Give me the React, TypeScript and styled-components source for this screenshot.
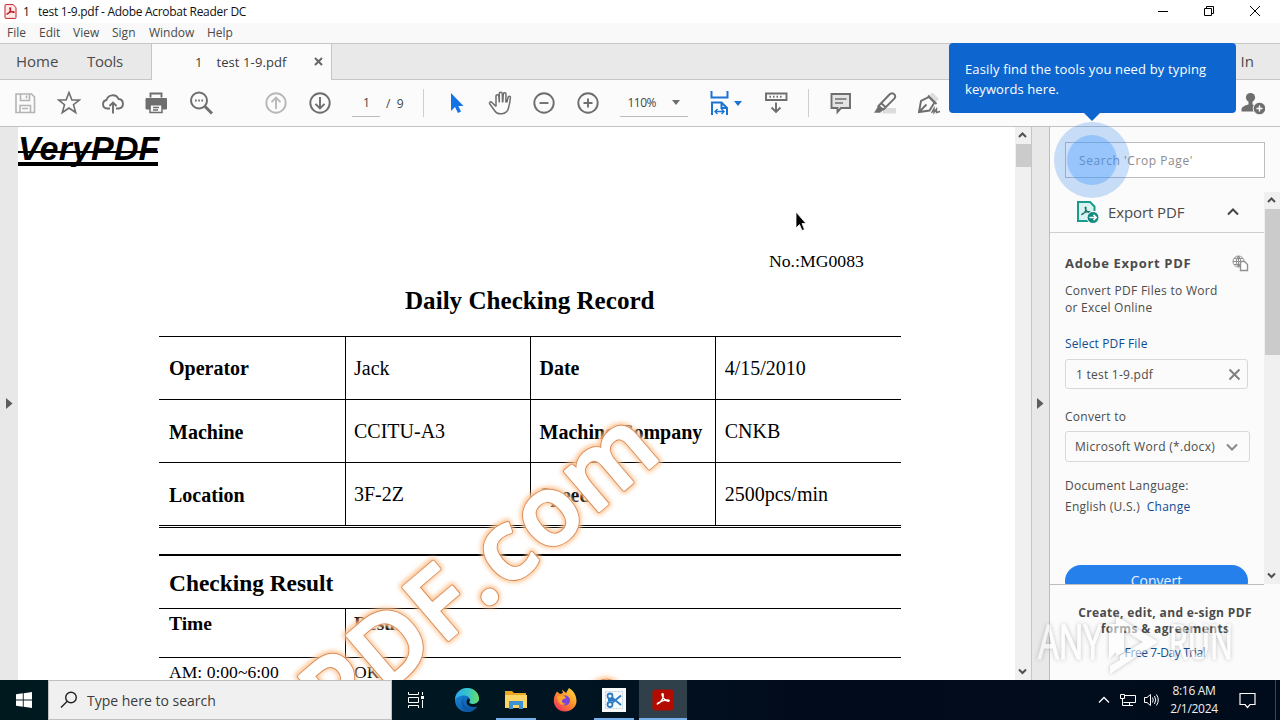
import React from 'react';
import styled, { createGlobalStyle } from 'styled-components';

const Global = createGlobalStyle`
  * { box-sizing: border-box; }
  body { margin: 0; background: #fff; font-family: "Open Sans", "Noto Sans", sans-serif; overflow: hidden; }
  svg { display: block; flex: none; }
`;

const Screen = styled.div`
  position: relative; width: 1280px; height: 720px; overflow: hidden;
  display: flex; flex-direction: column;
`;

const Label = styled.span<{ $ls?: number; $ml?: number }>`
  white-space: pre;
  letter-spacing: ${p => p.$ls ?? 0}px;
  margin-left: ${p => p.$ml ?? 0}px;
`;

/* ---- window chrome ---- */
const TitleBar = styled.header`
  height: 23px; flex: none; display: flex; align-items: center; padding: 0 19px 1px 4px;
  background: #fff; font-size: 12px; color: #111;
`;
const WindowButtons = styled.div`
  margin-left: auto; display: flex; gap: 34px; align-items: center; padding-bottom: 1px;
`;
const MenuBar = styled.nav`
  height: 20px; flex: none; display: flex; align-items: center; padding: 0 0 0 7px;
  background: #f9f9f9; font-size: 12px; color: #4a4a4a;
`;
const TabStrip = styled.div`
  height: 37px; flex: none; display: flex; background: #e9e9e9; color: #4b4b4b; font-size: 15px;
  border-top: 1px solid #c6c6c6; border-bottom: 1px solid #c6c6c6; align-items: center;
`;
const NavTab = styled.div<{ $w: number }>`
  width: ${p => p.$w}px; white-space: nowrap; padding-bottom: 1px;
`;
const FileTab = styled.div`
  width: 181px; height: 36px; margin-bottom: -1px; background: #fbfbfb; font-size: 13px;
  border-left: 1px solid #c6c6c6; border-right: 1px solid #c6c6c6; color: #3a3a3a;
  display: flex; align-items: center; padding: 0 8px 1px 43px; justify-content: space-between;
`;
const SignIn = styled.div`
  margin-left: auto; padding: 0 26px 1px 0; font-size: 15px;
`;
const Toolbar = styled.div`
  height: 47px; flex: none; display: flex; align-items: center; background: #fbfbfb;
  border-bottom: 1px solid #c2c2c2; padding-left: 13px; font-size: 12px; color: #444;
`;
const Group = styled.div<{ $ml?: number }>`
  display: flex; gap: 20px; margin-left: ${p => p.$ml ?? 0}px;
`;
const Field = styled.div<{ $w: number; $ml: number; $pl: number }>`
  width: ${p => p.$w}px; height: 27px; margin-left: ${p => p.$ml}px; padding-left: ${p => p.$pl}px;
  border-bottom: 1px solid #bdbdbd; display: flex; align-items: center; white-space: pre;
`;
const Divider = styled.div<{ $ml: number }>`
  width: 1px; height: 28px; background: #cfcfcf; margin-left: ${p => p.$ml}px;
`;
const Caret = styled.i<{ $c: string; $ml: number }>`
  margin-left: ${p => p.$ml}px; border: 4px solid transparent; border-top: 5px solid ${p => p.$c}; border-bottom: 0;
`;

/* ---- document ---- */
const Main = styled.main`
  height: 553px; flex: none; display: flex;
`;
const Gutter = styled.div<{ $w: number; $edge?: boolean; $left?: boolean }>`
  width: ${p => p.$w}px; flex: none; background: #e8e8e8; display: flex; align-items: center;
  padding-left: ${p => (p.$left ? 6 : 5)}px;
  border-left: ${p => (p.$edge ? '1px solid #c6c6c6' : '0')};
  border-right: ${p => (p.$edge ? '1px solid #bcbcbc' : '0')};
`;
const Page = styled.article`
  position: relative; width: 997px; flex: none; background: #fff; overflow: hidden; color: #000;
  font-family: "Liberation Serif", serif; display: flex; flex-direction: column;
`;
const Brand = styled.div`
  position: relative; width: 140px; height: 40px; flex: none; white-space: nowrap;
  font: italic bold 34px/40px "Liberation Sans", sans-serif; letter-spacing: 0.15px; padding-top: 1px;
  &::before { content: ''; position: absolute; left: 0; right: 0; top: 24px; height: 2px; background: #000; }
  &::after { content: ''; position: absolute; left: 0; right: 0; top: 35px; height: 4px; background: #000; }
`;
const DocNumber = styled.div`
  margin: 84px 0 0 751px; height: 20px; font-size: 17.7px; line-height: 20px;
`;
const DocTitle = styled.h1`
  margin: 15px 0 0 387px; height: 30px; font-size: 25.1px; line-height: 30px; white-space: nowrap;
`;
const Rows = styled.section`
  margin: 20px 0 0 141px; width: 742px; flex: none;
`;
const Row = styled.div`
  display: grid; grid-template-columns: 186px 185px 185px 186px; height: 63px; border-top: 1px solid #000;
`;
const Cell = styled.div<{ $bold?: boolean; $first?: boolean; $drop?: number; $pl: number }>`
  font-size: 20px; line-height: 24px; padding: ${p => 19 + (p.$drop ?? 0)}px 0 0 ${p => p.$pl}px;
  font-weight: ${p => (p.$bold ? 700 : 400)}; white-space: nowrap;
  border-left: ${p => (p.$first ? '0' : '1px solid #000')};
`;
const DoubleRule = styled.div`
  height: 3px; border-top: 1px solid #000; border-bottom: 1px solid #000;
`;
const Results = styled.section`
  margin: 26px 0 0 141px; width: 742px; flex: none; border-top: 2px solid #000;
`;
const ResultsTitle = styled.h2`
  margin: 0; height: 52px; padding: 13px 0 0 10px; font-size: 23.4px; line-height: 28px;
`;
const ResultRow = styled.div<{ $h: number; $size: number; $bold?: boolean }>`
  display: grid; grid-template-columns: 186px 556px; height: ${p => p.$h}px; border-top: 1px solid #000;
  font-size: ${p => p.$size}px; font-weight: ${p => (p.$bold ? 700 : 400)}; line-height: ${p => (p.$bold ? 30 : 28)}px;
  > div { padding-left: 10px; }
  > div + div { padding-left: 8px; border-left: ${p => (p.$bold ? '1px solid #000' : '1px solid transparent')}; }
`;
const Overlay = styled.svg`
  position: absolute; left: 0; top: 0;
`;
const Stamp = styled.text`
  font: 600 97px "Open Sans", sans-serif; letter-spacing: 3.4px; stroke-linejoin: round;
`;

/* ---- scrollbars ---- */
const ScrollBar = styled.div<{ $w: number }>`
  width: ${p => p.$w}px; flex: none; background: #f0f0f0; display: flex; flex-direction: column; align-items: center;
`;
const ScrollThumb = styled.div<{ $h: number }>`
  width: 15px; height: ${p => p.$h}px; background: #cbcbcb; margin-bottom: auto;
`;
const ScrollArrow = styled.div`
  height: 17px; width: 100%; display: flex; align-items: center; justify-content: center; padding-right: 1px;
`;

/* ---- tools panel ---- */
const Panel = styled.aside`
  width: 230px; background: #fbfbfb; display: flex; flex-direction: column; color: #4b4b4b; font-size: 12px;
`;
const SearchBox = styled.div`
  width: 200px; height: 36px; margin: 15px 0 14px 15px; flex: none; background: #fff;
  border: 1px solid #bdbdbd; padding-left: 13px; display: flex; align-items: center; color: #8c8c8c;
`;
const PanelBody = styled.div`
  height: 392px; flex: none; display: flex;
`;
const PanelScroll = styled.div`
  width: 214px; height: 393px; overflow: hidden; display: flex; flex-direction: column; border-bottom: 1px solid #bdbdbd;
`;
const ExportHeader = styled.div`
  height: 41px; flex: none; border-bottom: 1px solid #cfcfcf; display: flex; align-items: center;
  padding: 0 25px 0 26px; font-size: 15px;
`;
const HeaderChevron = styled.span`
  margin-left: auto;
`;
const ExportForm = styled.div`
  padding: 0 16px 0 15px; display: flex; flex-direction: column; align-items: flex-start;
`;
const Line = styled.div<{ $mt: number; $c?: string; $bold?: boolean; $size?: number; $ls?: number }>`
  margin-top: ${p => p.$mt}px; height: 18px; line-height: 18px; white-space: pre; width: 184px; flex: none;
  display: flex; align-items: center; justify-content: ${p => (p.$bold ? 'space-between' : 'flex-start')};
  color: ${p => p.$c ?? '#4b4b4b'}; letter-spacing: ${p => p.$ls ?? 0.25}px;
  font-weight: ${p => (p.$bold ? 700 : 400)}; font-size: ${p => p.$size ?? 12}px;
`;
const Box = styled.div<{ $w: number; $h: number; $mt: number; $pl: number; $pr: number }>`
  width: ${p => p.$w}px; height: ${p => p.$h}px; margin-top: ${p => p.$mt}px; flex: none;
  border: 1px solid #d8d8d8; border-radius: 3px; display: flex; align-items: center; justify-content: space-between;
  padding: 0 ${p => p.$pr}px 0 ${p => p.$pl}px;
`;
const ConvertButton = styled.div`
  width: 183px; height: 32px; margin-top: 49px; flex: none; border-radius: 16px; background: #2680eb; color: #e8f2ff;
  font-size: 14px; line-height: 31px; text-align: center;
`;
const Link = styled.span`
  color: #0f4c94;
`;
const Promo = styled.div`
  flex: 1; text-align: center; padding-top: 21px; font-weight: 700; font-size: 12px; line-height: 15.5px; white-space: pre;
  letter-spacing: 0.36px;
`;
const PromoLink = styled.div`
  margin-top: 9px; font-weight: 400; color: #0f4c94; letter-spacing: -0.4px;
`;

/* ---- floating parts ---- */
const Callout = styled.div`
  position: absolute; left: 949px; top: 43px; width: 287px; height: 70px; border-radius: 4px; background: #0d66d0;
  color: #fff; font-size: 13px; line-height: 20px; padding: 16px 0 0 16px; white-space: nowrap;
  &::after {
    content: ''; position: absolute; left: 134px; top: 69px;
    border: 9px solid transparent; border-top-color: #0d66d0; border-bottom: 0;
  }
`;
const Pulse = styled.div`
  position: absolute; left: 1054px; top: 122px; width: 76px; height: 76px; border-radius: 50%;
  background: rgba(38, 128, 235, 0.25); display: flex; align-items: center; justify-content: center;
  &::after { content: ''; width: 50px; height: 50px; border-radius: 50%; background: rgba(70, 155, 255, 0.38); }
`;
const Recorder = styled.svg`
  position: absolute; left: 1030px; top: 606px;
`;
const Pointer = styled.svg`
  position: absolute; left: 795px; top: 211px;
`;

/* ---- taskbar ---- */
const Taskbar = styled.footer`
  height: 40px; flex: none; display: flex; align-items: stretch;
  background: linear-gradient(90deg, #00191f, #001521 45%, #020b1c 62%, #000c1b);
`;
const StartButton = styled.div`
  width: 48px; display: flex; align-items: center; justify-content: center;
`;
const TaskSearch = styled.div`
  width: 344px; background: #f0f0f0; border: 1px solid #bfbfbf; display: flex; align-items: center;
  padding-left: 11px; font-size: 14px; color: #3c3c3c;
`;
const TaskButton = styled.div<{ $w?: number; $open?: boolean; $active?: boolean; $ml?: number }>`
  width: ${p => p.$w ?? 40}px; margin-left: ${p => p.$ml ?? 0}px; display: flex; align-items: center; justify-content: center;
  background: ${p => (p.$active ? '#2f404b' : 'transparent')}; padding-top: 2px;
  border-bottom: 2px solid ${p => (p.$open ? '#76b0ec' : 'transparent')};
`;
const Tray = styled.div`
  margin-left: auto; display: flex; align-items: center; color: #f0f0f0; font-size: 12px;
`;
const TrayIcons = styled.div`
  display: flex; align-items: center; gap: 6px; padding-left: 9px;
`;
const Clock = styled.div`
  width: 52px; margin: 0 19px 0 7px; text-align: center; line-height: 18px; white-space: nowrap;
`;
const TrayEdge = styled.div`
  width: 1px; height: 40px; background: #3b4650; margin: 0 4px 0 19px;
`;

const Icon = ({ children, c = '#6e6e6e', w = 1.9 }: { children: React.ReactNode; c?: string; w?: number }) => (
  <svg width="24" height="24" viewBox="0 0 24 24" fill="none" stroke={c} strokeWidth={w}>{children}</svg>
);
const Chevron = ({ up, w = 8, c = '#505050', s = 2 }: { up?: boolean; w?: number; c?: string; s?: number }) => (
  <svg width={w + 2} height={w / 2 + 3} fill="none" stroke={c} strokeWidth={s}>
    <path d={up ? `M1 ${w / 2 + 1.5} L${w / 2 + 1} 1.5 L${w + 1} ${w / 2 + 1.5}` : `M1 1.5 L${w / 2 + 1} ${w / 2 + 1.5} L${w + 1} 1.5`} />
  </svg>
);
const SideArrow = () => <svg width="7" height="11"><path d="M0 0 L6.5 5.5 L0 11Z" fill="#5c5c5c" /></svg>;

const AcrobatMark = ({ c, w = 1.6 }: { c: string; w?: number }) => (
  <path d="M3 17 C8 15.5 12 8 11 3.2 C10.600 1.800 9 2.200 9.300 4 C10 8 14 13 18.500 13.200 C20.500 13 19.500 11 17 11.200 C12 11.500 7.500 13 4 15.500 C2.500 16.700 2 17.500 3 17" fill="none" stroke={c} strokeWidth={w} />
);

const stamps = [{ x: 319, y: 608 }, { x: 304, y: 862 }];

const details = [
  ['Operator', 'Jack', 'Date', '4/15/2010'],
  ['Machine', 'CCITU-A3', 'Machine Company', 'CNKB'],
  ['Location', '3F-2Z', 'Speed', '2500pcs/min'],
];
const cellInsets = [10, 8, 8.5, 8.7];

export default function App() {
  return (
    <Screen>
      <Global />
      <TitleBar>
        <svg width="13" height="15" viewBox="0 0 13 15">
          <path d="M1 1.500 Q1 .6 2 .6 H9 L12 3.500 V13.500 Q12 14.400 11 14.400 H2 Q1 14.400 1 13.500Z" fill="#ffe9e9" stroke="#c4202b" />
          <g transform="translate(1.800 2.800) scale(.43)"><AcrobatMark c="#c4202b" w={3} /></g>
        </svg>
        <Label $ml={6} $ls={-0.29}>{'1   test 1-9.pdf - Adobe Acrobat Reader DC'}</Label>
        <WindowButtons>
          <svg width="12" height="12"><path d="M1 6.500H11" stroke="#000" /></svg>
          <svg width="12" height="12" fill="none" stroke="#000"><path d="M1.500 3.500h7v7h-7z M3.500 3V1.500h7v7H9" /></svg>
          <svg width="12" height="12" fill="none" stroke="#000"><path d="M1 1L11 11M11 1L1 11" /></svg>
        </WindowButtons>
      </TitleBar>
      <MenuBar>
        <NavTab $w={32}>File</NavTab><NavTab $w={34}>Edit</NavTab><NavTab $w={39}>View</NavTab>
        <NavTab $w={37}>Sign</NavTab><NavTab $w={58}>Window</NavTab><NavTab $w={40}>Help</NavTab>
      </MenuBar>
      <TabStrip>
        <NavTab $w={71}><Label $ml={16}>Home</Label></NavTab>
        <NavTab $w={80}><Label $ml={16} $ls={-0.3}>Tools</Label></NavTab>
        <FileTab>
          <Label $ls={0.1}>{'1    test 1-9.pdf'}</Label>
          <svg width="9" height="9" stroke="#666" strokeWidth="2"><path d="M1 1L8 8M8 1L1 8" /></svg>
        </FileTab>
        <SignIn>Sign In</SignIn>
      </TabStrip>
      <Toolbar>
        <Group>
          <Icon c="#b4b4b4" w={1.6}><path d="M3 3H18.500L21.500 6V21.500H3Z M7.500 3V9.500H16.500V3 M7 21V14.500H17.500V21 M13.500 4.500V7.500 M9 17.500H15" /></Icon>
          <Icon w={1.6}><path d="M12 1.500L14.900 9H22.500L16.500 13.700L18.700 21.500L12 17L5.300 21.500L7.500 13.700L1.500 9H9.100Z" /></Icon>
          <Icon><path d="M9 17.500H6A4.300 4.300 0 0 1 5.500 9A6.500 6.500 0 0 1 17.600 8A4.800 4.800 0 0 1 18 17.500H15 M12 22.500V11.500 M8.500 15L12 11.500L15.500 15" /></Icon>
          <Icon><path d="M5.500 6.500V2.500H16.500V6.500" /><path d="M1 7.500H21.500V18H17.500V14H5V18H1Z" fill="#6e6e6e" strokeWidth="1" /><path d="M5 14V21.500H17V14 M8 16.500H14 M8 19H13" strokeWidth="1.500" /></Icon>
          <Icon w={2}><circle cx="10" cy="9.500" r="8" /><path d="M16 15.500L23 22.500" strokeWidth="3" /><path d="M6 9.500H7.700M9.200 9.500H10.900M12.400 9.500H14.100" /></Icon>
        </Group>
        <Group $ml={51}>
          <Icon c="#b8b8b8"><circle cx="12" cy="12" r="9.700" /><path d="M12 18V7M7.500 11.200L12 6.700L16.500 11.200" /></Icon>
          <Icon><circle cx="12" cy="12" r="9.700" /><path d="M12 6V17M7.500 12.800L12 17.300L16.500 12.800" /></Icon>
        </Group>
        <Field $w={28} $ml={20} $pl={11}>1</Field>
        <Label $ml={6}>{'/  9'}</Label>
        <Divider $ml={19} />
        <Group $ml={20}>
          <Icon c="none"><path d="M7 2V20L11 16L14 22L17 20.500L14.300 15H19.500Z" fill="#1473e6" /></Icon>
          <Icon w={1.500}><path d="M8 15.500L4 11.500C2.500 10 .8 11.500 2 13.200L6.500 19.500C9.500 24.500 18.500 23.500 20.200 18C21.300 14.500 22.200 9 22.400 6.500C22.500 4.700 20.400 4.700 20 6.500L18.800 11.500M8 15.500V5C8 3.200 10.500 3.200 10.800 5L11.300 11.500M11.300 11V2.500C11.300 .8 14.200 .8 14.300 2.500L14.500 11.500M14.800 11L15.300 3C15.500 1.200 18 1.300 18 3.200L17.800 11.500" /></Icon>
          <Icon><circle cx="12" cy="12" r="9.700" /><path d="M7.500 12H16.500" /></Icon>
          <Icon><circle cx="12" cy="12" r="9.700" /><path d="M7.500 12H16.500M12 7.500V16.500" /></Icon>
        </Group>
        <Field $w={68} $ml={20} $pl={8}><Label $ls={-0.5}>110%</Label><Caret $c="#6e6e6e" $ml={16} /></Field>
        <Group $ml={19}>
          <Icon c="#1b74d4" w={2}><path d="M4.500 0V6.500H20.500V0 M5 24V11.500H14.500L20 17V24 M14.500 11.500V17H20" /><path d="M8 20.500H17 M10.500 18L8 20.500L10.500 23 M14.500 18L17 20.500L14.500 23" strokeWidth="1.400" /></Icon>
        </Group>
        <Caret $c="#1b74d4" $ml={3} />
        <Group $ml={22}>
          <Icon><path d="M2 2.500H22.500V9H2Z M5.500 5.800H7M9 5.800H10.500M12.500 5.800H14M16 5.800H17.500 M12 11.500V20.500 M7.500 16.500L12 21L16.500 16.500" /></Icon>
        </Group>
        <Divider $ml={20} />
        <Group $ml={20}>
          <Icon><path d="M2.500 3H21V17H12L8.500 21V17H2.500Z" fill="#e4e4e4" /><path d="M6 8H17.500M6 12H14" strokeWidth="1.300" /></Icon>
          <Icon><path d="M12 17H23V22.500H9Z" fill="#dcdcdc" stroke="none" /><path d="M5.500 15L16.500 3.500Q19 1 21.500 3.500Q23 5.500 21.500 7.500L10.500 18.500ZM8 12L13 16.500" /><path d="M5.500 15L10.500 18.500L7 21.500H1.500Z" fill="#6e6e6e" strokeWidth=".5" /></Icon>
          <Icon><path d="M12.500 4L15.500 1.500L22 8L18.500 11Z" fill="#dcdcdc" stroke="none" /><path d="M2 21L4 10L12 6L17.500 11.500L12.500 19.500ZM2 21L9.500 13.500M11 4.500L19.500 13" /><path d="M14.500 22L17 17.500V21.500L19.500 18V21.500L23 20.500" strokeWidth="1.400" /></Icon>
        </Group>
        <Group $ml={300}>
          <Icon c="none"><circle cx="9.500" cy="6.500" r="4.600" fill="#6e6e6e" /><path d="M.5 20.500V18Q1 15 7.500 13.500V9H11.500V13.500Q16 14.500 16 20.500Z" fill="#6e6e6e" /><circle cx="18.500" cy="17.500" r="6.300" fill="#6e6e6e" stroke="#fbfbfb" strokeWidth="1" /><path d="M15.500 17.500H21.500M18.500 14.500V20.500" stroke="#fff" strokeWidth="1.500" /></Icon>
        </Group>
      </Toolbar>

      <Main>
        <Gutter $w={18} $left><SideArrow /></Gutter>
        <Page>
          <Brand>VeryPDF</Brand>
          <DocNumber>No.:MG0083</DocNumber>
          <DocTitle>Daily Checking Record</DocTitle>
          <Rows>
            {details.map((r, i) => (
              <Row key={r[0]}>
                {r.map((t, j) => (
                  <Cell key={t} $first={j === 0} $bold={j % 2 === 0} $drop={i > 0 && j % 2 === 0 ? 1 : 0} $pl={cellInsets[j]}>{t}</Cell>
                ))}
              </Row>
            ))}
            <DoubleRule />
          </Rows>
          <Results>
            <ResultsTitle>Checking Result</ResultsTitle>
            <ResultRow $h={49} $size={19.5} $bold><div>Time</div><div>Result</div></ResultRow>
            <ResultRow $h={49} $size={17.6}><div>AM: 0:00~6:00</div><div>OK</div></ResultRow>
          </Results>
          <Overlay width="997" height="553">
            <defs><filter id="glow" x="-20%" y="-40%" width="140%" height="180%"><feGaussianBlur stdDeviation="2" /></filter></defs>
            {stamps.map(s => (
              <g key={s.y} transform={`translate(${s.x} ${s.y}) rotate(-40.5)`}>
                <Stamp fill="#fdc594" stroke="#fdc594" strokeWidth="7.500" filter="url(#glow)">PDF.com</Stamp>
                <Stamp fill="#fff" stroke="#d98a55" strokeWidth="4">PDF.com</Stamp>
                <Stamp fill="#fff" stroke="#fff" strokeWidth="2.200">PDF.com</Stamp>
              </g>
            ))}
          </Overlay>
        </Page>
        <ScrollBar $w={16}>
          <ScrollArrow><Chevron up w={7} /></ScrollArrow>
          <ScrollThumb $h={23} />
          <ScrollArrow><Chevron w={7} /></ScrollArrow>
        </ScrollBar>
        <Gutter $w={19} $edge><SideArrow /></Gutter>
        <Panel>
          <SearchBox><Label $ls={0.57}>Search 'Crop Page'</Label></SearchBox>
          <PanelBody>
            <PanelScroll>
              <ExportHeader>
                <svg width="24" height="24" fill="none" stroke="#1b9a8e" strokeWidth="2">
                  <path d="M12 21H2V2H14L18.500 6.500V11" fill="#d7f2ef" />
                  <g transform="translate(4.500 6) scale(.5)"><AcrobatMark c="#1b6f69" w={2.400} /></g>
                  <circle cx="17" cy="17.500" r="6" fill="#12887e" stroke="#fbfbfb" strokeWidth="1" />
                  <path d="M13.500 17.500H20M17.500 14.800L20.200 17.500L17.500 20.200" stroke="#fff" strokeWidth="1.600" />
                </svg>
                <Label $ml={8} $ls={-0.1}>Export PDF</Label>
                <HeaderChevron><Chevron up w={10} c="#444" /></HeaderChevron>
              </ExportHeader>
              <ExportForm>
                <Line $mt={21} $bold $size={13}>
                  <Label $ls={0.68}>Adobe Export PDF</Label>
                  <svg width="17" height="17" viewBox="0 0 17 17" fill="none" stroke="#909090">
                    <circle cx="6.500" cy="6.500" r="5.500" /><path d="M1 6.500H12M6.500 1V12M6.500 1Q2 6.500 6.500 12M6.500 1Q11 6.500 6.500 12M2 3.500H11M2 9.500H8" />
                    <path d="M8.500 6.500H12.500L15.500 9.500V15.500H8.500Z" fill="#fff" strokeWidth="1.400" />
                  </svg>
                </Line>
                <Line $mt={10} $ls={0.29}>Convert PDF Files to Word</Line>
                <Line $mt={-1}>or Excel Online</Line>
                <Line $mt={18} $c="#0f4c94" $ls={0.14}>Select PDF File</Line>
                <Box $w={183} $h={30} $mt={6} $pl={10} $pr={6}>
                  <Label $ls={0.25}>1 test 1-9.pdf</Label>
                  <svg width="13" height="13" stroke="#808080" strokeWidth="2"><path d="M1.500 1.500L11.500 11.500M11.500 1.500L1.500 11.500" /></svg>
                </Box>
                <Line $mt={19}>Convert to</Line>
                <Box $w={185} $h={31} $mt={5} $pl={9} $pr={11}>
                  <Label $ls={0.3}>Microsoft Word (*.docx)</Label><Chevron w={10} c="#888" />
                </Box>
                <Line $mt={15} $ls={0.27}>Document Language:</Line>
                <Line $mt={3}>English (U.S.)  <Link>Change</Link></Line>
                <ConvertButton>Convert</ConvertButton>
              </ExportForm>
            </PanelScroll>
            <ScrollBar $w={16}>
              <ScrollArrow><Chevron up w={7} /></ScrollArrow>
              <ScrollThumb $h={146} />
              <ScrollArrow><Chevron w={7} /></ScrollArrow>
            </ScrollBar>
          </PanelBody>
          <Promo>
            {'Create, edit, and e-sign PDF\nforms & agreements'}
            <PromoLink>Free 7-Day Trial</PromoLink>
          </Promo>
        </Panel>
      </Main>

      <Taskbar>
        <StartButton>
          <svg width="16" height="16" fill="#fff"><path d="M0 2.300L6.800 1.300V7.500H0ZM7.700 1.200L16 0V7.500H7.700ZM0 8.400H6.800V14.700L0 13.700ZM7.700 8.400H16V16L7.700 14.800Z" /></svg>
        </StartButton>
        <TaskSearch>
          <svg width="18" height="18" fill="none" stroke="#222" strokeWidth="1.400"><circle cx="11" cy="6.500" r="5.300" /><path d="M7.300 10.300L1 16.600" /></svg>
          <Label $ml={9}>Type here to search</Label>
        </TaskSearch>
        <TaskButton $w={48}>
          <svg width="18" height="18" fill="none" stroke="#fff"><path d="M1.500 1V3.500H11.500V1M1.500 6.500H11.500V11.500H1.500ZM1.500 17V14.500H11.500V17M15.500 1V4M15.500 9V17" /><path d="M14 5H17V8H14Z" fill="#fff" stroke="none" /></svg>
        </TaskButton>
        <TaskButton $ml={7}>
          <svg width="24" height="24" viewBox="0 0 24 24">
            <defs>
              <linearGradient id="edgeTop" x1="0" x2="1"><stop offset="0" stopColor="#2aa9e8" /><stop offset=".55" stopColor="#36c6c9" /><stop offset="1" stopColor="#6be05a" /></linearGradient>
              <linearGradient id="edgeLow" x1="0" y1="0" x2="1" y2="1"><stop offset="0" stopColor="#1a8fe0" /><stop offset="1" stopColor="#0a4a9c" /></linearGradient>
            </defs>
            <circle cx="12" cy="12" r="12" fill="url(#edgeLow)" />
            <path d="M0 11C1 4 6 0 12 0C19 0 24 5 24 10.500C24 14 21 16 18 16C15 16 13.500 15 14.500 13.500C16 11 13.500 7.500 9.500 7.500C5 7.500 1 9.500 0 12Z" fill="url(#edgeTop)" />
            <path d="M9 9C6 15 11 20.500 16 20.500C19 20.500 21 19.500 22.500 18C20 22 16.500 24 12.500 24C7 23 4.500 14 9 9Z" fill="#0c59a4" />
            <path d="M14.500 13.500C13.500 15 15 16 18 16C20.500 16 22.500 15 24 13V17.500C20 20 14 19.500 12 16C11 14 12 11 13.500 10.500C15 11 15 12.500 14.500 13.500Z" fill="#00151f" />
          </svg>
        </TaskButton>
        <TaskButton $ml={9} $open>
          <svg width="22" height="20" viewBox="0 0 22 20">
            <path d="M0 1H7L9 3H21V8H0Z" fill="#e8a820" /><path d="M0 5H22V18H0Z" fill="#fbd667" />
            <path d="M4 11H18V19H14V15H8V19H4Z" fill="#3d92d4" />
          </svg>
        </TaskButton>
        <TaskButton $ml={9}>
          <svg width="24" height="24" viewBox="0 0 24 24">
            <defs><linearGradient id="fox" x1="1" y1="0" x2=".2" y2="1"><stop offset="0" stopColor="#ffe94a" /><stop offset=".5" stopColor="#ff9428" /><stop offset="1" stopColor="#f0305c" /></linearGradient></defs>
            <path d="M4 3.500L7 6L10 5L9 1.500L13 5L16 0C21 3 23.500 8 23.500 13C23.500 19 18 23.500 12 23.500C5 23.500 .5 18 .8 12C1 8 2.500 6 4 3.500Z" fill="url(#fox)" />
            <circle cx="12" cy="12.500" r="5" fill="#7a45d8" /><path d="M4 9C7 7 11 7 13 10L9.500 11.500C8 14 10 16 13 15.500C9 19 4.500 15 4 9Z" fill="#ffa52b" />
          </svg>
        </TaskButton>
        <TaskButton $ml={9} $open>
          <svg width="24" height="24" viewBox="0 0 24 24" fill="none" stroke="#2b7cc4" strokeWidth="1.800">
            <path d="M0 0H24V24H0Z" fill="#f8fafc" stroke="none" /><path d="M3.500 3.500H20.500V20.500H3.500Z" stroke="#c3d2e0" strokeWidth="1" strokeDasharray="2 1" />
            <circle cx="8" cy="8" r="2.500" /><circle cx="8" cy="16.500" r="2.500" /><path d="M10 9.500L19 17M10 15L19 7.500M6 12H13" />
          </svg>
        </TaskButton>
        <TaskButton $ml={5} $w={48} $open $active>
          <svg width="22" height="22" viewBox="0 0 22 22"><rect x=".5" y=".5" width="21" height="21" rx="3" fill="#b30b00" /><g transform="translate(3.500 3) scale(.7)"><AcrobatMark c="#fff" w={2} /></g></svg>
        </TaskButton>
        <Tray>
          <Chevron up w={10} c="#fff" s={1.300} />
          <TrayIcons>
            <svg width="18" height="16" fill="none" stroke="#fff"><path d="M5.500 3.500H16.500V10.500H4.500M1.500 2.500H5.500V6.500H1.500ZM3.500 6.500V13.500H8M10.500 10.500V13.500M6 13.500H14" /></svg>
            <svg width="18" height="16" fill="none" stroke="#fff"><path d="M1.500 5.500H4L7.500 2.500V13.500L4 10.500H1.500ZM9.500 5.500Q11 8 9.500 10.500M11.500 4Q14 8 11.500 12M13.500 2.500Q17 8 13.500 13.500" /></svg>
          </TrayIcons>
          <Clock><Label $ls={-0.3}>8:16 AM</Label><br /><Label $ls={-0.3}>2/1/2024</Label></Clock>
          <svg width="17" height="17" fill="none" stroke="#fff" strokeWidth="1.200"><path d="M1 1.500H16V12.500H11L8.500 15.500L6 12.500H1Z" /></svg>
          <TrayEdge />
        </Tray>
      </Taskbar>

      <Callout><Label $ls={0.15}>Easily find the tools you need by typing</Label><br /><Label $ls={0.1}>keywords here.</Label></Callout>
      <Pulse />
      <Pointer width="12" height="21"><path d="M1 1V17L4.500 13.500L7 19.500L9.500 18.500L7 12.500H11Z" fill="#000" stroke="#fff" strokeWidth=".8" /></Pointer>
      <Recorder width="215" height="74">
        <defs><filter id="soft" x="-10%" y="-20%" width="120%" height="140%"><feDropShadow dx="0" dy="0" stdDeviation="2" floodColor="#666" floodOpacity=".75" /></filter></defs>
        <g filter="url(#soft)" fill="#fff" stroke="#fff" opacity=".55" fontFamily="Open Sans, sans-serif" fontSize="48">
          <text x="8" y="53" textLength="64" lengthAdjust="spacingAndGlyphs">ANY</text>
          <text x="139" y="53" textLength="64" lengthAdjust="spacingAndGlyphs">RUN</text>
          <path stroke="none" d="M79 18H86V46L79 53ZM86 10L128 36L80 68V60L90 54V50L113 36L94 24V46L86 50Z" />
        </g>
      </Recorder>
    </Screen>
  );
}
